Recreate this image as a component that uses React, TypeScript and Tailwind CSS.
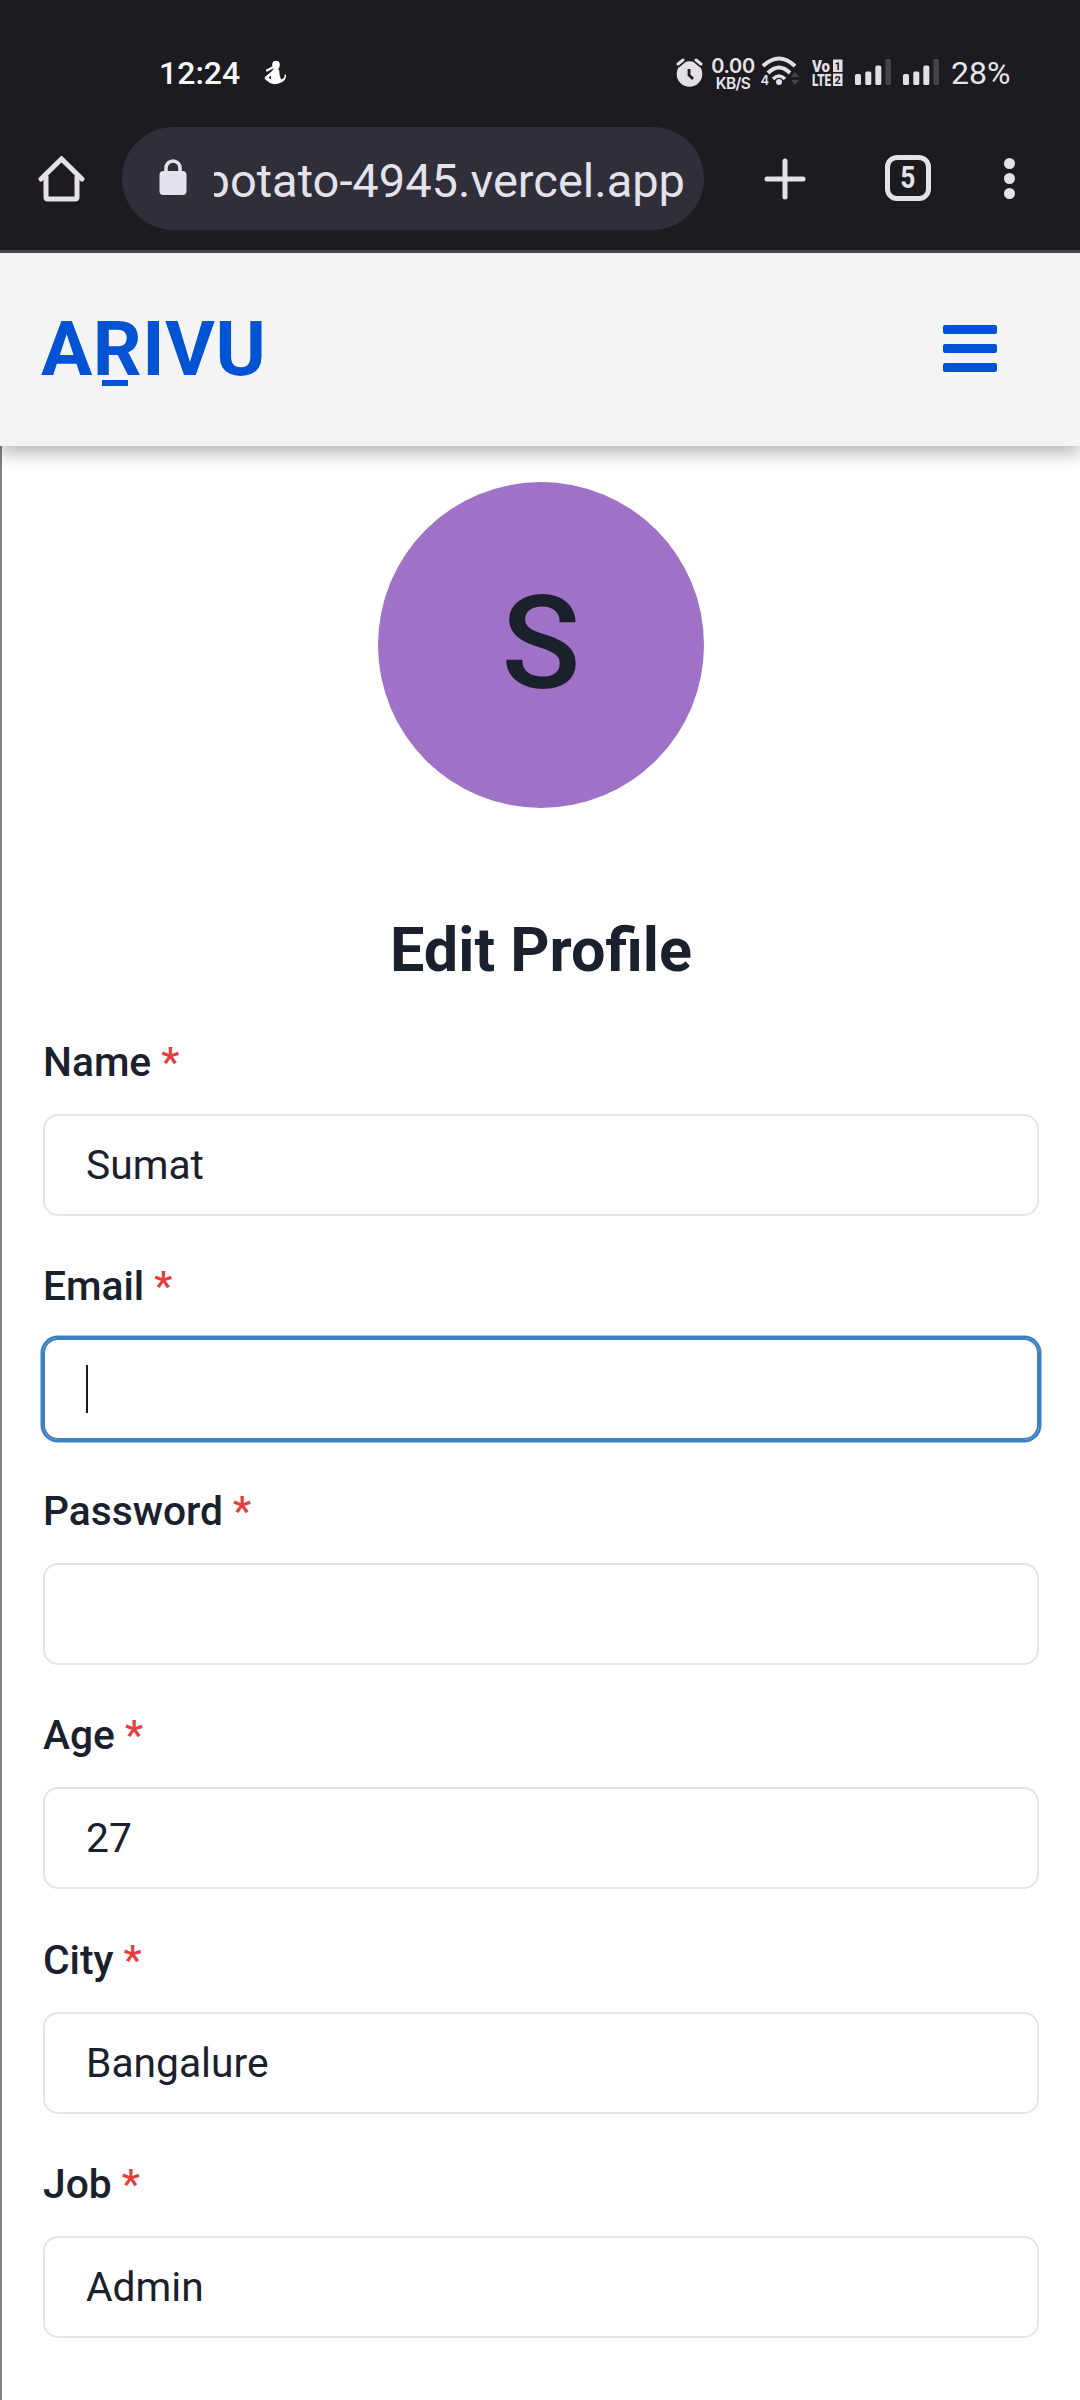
import React from "react";

const fields = [
  { label: "Name", value: "Sumat" },
  { label: "Email", value: "", focused: true },
  { label: "Password", value: "" },
  { label: "Age", value: "27" },
  { label: "City", value: "Bangalure" },
  { label: "Job", value: "Admin" },
];

function SignalBars() {
  return (
    <svg width="38" height="28" viewBox="0 0 38 28" className="shrink-0">
      <rect x="0" y="16" width="6" height="11" rx="1.5" fill="#e2e0e6" />
      <rect x="10.3" y="13.5" width="6" height="13.5" rx="1.5" fill="#e2e0e6" />
      <rect x="20.3" y="7.5" width="6" height="19.5" rx="1.5" fill="#e2e0e6" />
      <rect x="30.5" y="1" width="5.5" height="26" rx="1.5" fill="#454449" />
    </svg>
  );
}

function StatusBar() {
  return (
    <div className="flex h-[127px] items-start pt-[52px] text-[#e6e4ea]">
      <div className="-mt-[1px] ml-[159px] w-[104px] text-[32px] leading-[44px] font-medium text-[#f5f5f7] font-['Roboto',sans-serif]">
        12:24
      </div>
      <svg width="24" height="28" viewBox="0 0 24 28" className="mt-[8px] shrink-0">
        <ellipse cx="13" cy="5" rx="3.8" ry="4.2" fill="#fff" />
        <path d="M4 10.500 9.500 7.500" stroke="#fff" strokeWidth="2" strokeLinecap="round" />
        <path
          d="M11 8.500h4q2 2 1.500 6l1.500 5q4-1 3.500-4.500 2-1.500 1.500 1.500-.5 4-5 6-6 3-11 .5L3 20q-2.500-2-.5-3.500L8 12Z"
          fill="#fff"
        />
        <path d="m5.500 17.500 2.500-2v4Z" fill="#1c1b20" />
      </svg>
      <svg width="28" height="30" viewBox="0 0 28 30" className="mt-[6px] ml-[389px] shrink-0">
        <circle cx="13.5" cy="16" r="12.8" fill="#e2e0e6" />
        <path d="M1 6.500 7.500 1M19.500 1 26 6.500" stroke="#1c1b20" strokeWidth="7" />
        <path d="M2 6 7 2M20 2 25 6" stroke="#e2e0e6" strokeWidth="3" strokeLinecap="round" />
        <path d="M13 11v6l4 4" fill="none" stroke="#1c1b20" strokeWidth="2.8" />
      </svg>
      <div className="mt-[5px] ml-[7px] flex w-[44px] flex-col items-center font-['Inter',sans-serif] font-semibold">
        <span className="text-[20px] leading-[19px] font-semibold tracking-[-0.3px]">0.00</span>
        <span className="text-[15.500px] leading-[15px] tracking-[-0.7px]">KB/S</span>
      </div>
      <svg width="42" height="34" viewBox="0 0 42 34" className="mt-[3px] ml-[5px] shrink-0">
        <g fill="none" stroke="#e2e0e6" strokeWidth="4">
          <path d="M3 11q16-15 32 0" />
          <path d="M8 18q11-11 22 0" />
          <path d="M13 24q6-6 12 0" strokeWidth="3.5" />
        </g>
        <circle cx="19" cy="27" r="3" fill="#e2e0e6" />
        <text x="0.500" y="29.500" fontSize="13" fontWeight="600" fill="#e2e0e6" fontFamily="Inter">4</text>
        <path d="m31 22 4-5 4 5ZM31 25l4 5 4-5Z" fill="#454449" />
      </svg>
      <svg width="32" height="32" viewBox="0 -2 32 32" className="mt-[5px] ml-[10px] shrink-0">
        <g fill="#e2e0e6" fontFamily="Roboto" fontWeight="900">
          <text x="0" y="12.500" fontSize="16" textLength="18" lengthAdjust="spacingAndGlyphs">Vo</text>
          <text x="0" y="26.500" fontSize="16" textLength="19" lengthAdjust="spacingAndGlyphs">LTE</text>
          <rect x="21" y="0.500" width="9.500" height="12.500" />
          <rect x="21" y="14.500" width="9.500" height="12.500" />
        </g>
        <g fill="#1c1b20" fontFamily="Roboto" fontWeight="700" fontSize="11">
          <text x="22.500" y="10.700">1</text>
          <text x="22.500" y="24.700">2</text>
        </g>
      </svg>
      <div className="mt-[6px] ml-[11px] flex gap-[10px]">
        <SignalBars />
        <SignalBars />
      </div>
      <div className="-mt-[1px] ml-[10px] text-[32px] leading-[44px] font-['Roboto',sans-serif]">28%</div>
    </div>
  );
}

function BrowserBar() {
  return (
    <div className="flex h-[126px] items-start border-b-[3px] border-[#48474b] text-[#e4e2ea]">
      <svg width="50" height="50" viewBox="0 0 50 50" className="mt-[26px] ml-[36px] shrink-0" fill="none" stroke="#e4e2e6" strokeWidth="5" strokeLinecap="round">
        <path d="M5 26 25.500 6 46 26" />
        <path d="M10 24v20q0 2 2 2h27q2 0 2-2V24" />
      </svg>
      <div className="ml-[36px] flex h-[103px] w-[582px] items-center rounded-full bg-[#2f2e39] pl-[37px]">
        <svg width="28" height="37" viewBox="0 0 28 37" className="-mt-[3px] shrink-0">
          <rect x="0.500" y="12" width="27" height="24" rx="4" fill="#e4e2ea" />
          <path d="M7 14V9a7 7 0 0 1 14 0v5" fill="none" stroke="#e4e2ea" strokeWidth="3.500" />
        </svg>
        <div className="mt-[4px] ml-[27px] flex w-[471px] justify-end overflow-hidden text-[47px] leading-[64px] whitespace-nowrap font-['Roboto',sans-serif]">
          <span className="shrink-0">potato-4945.vercel.app</span>
        </div>
      </div>
      <svg width="42" height="42" viewBox="0 0 42 42" className="mt-[31px] ml-[60px] shrink-0" stroke="#e4e2e6" strokeWidth="5" strokeLinecap="round">
        <path d="M3 21h36M21 3v36" />
      </svg>
      <div className="mt-[28px] ml-[79px] flex h-[46px] w-[46px] items-center justify-center rounded-[12px] border-[5px] border-[#e4e2e6]">
        <span className="-mt-[1px] scale-x-[.85] text-[31px] leading-[32px] font-bold font-['Roboto',sans-serif]">5</span>
      </div>
      <div className="mt-[31px] ml-[73px] flex flex-col gap-[4px]">
        <i className="h-[11px] w-[11px] rounded-full bg-[#e4e2e6]" />
        <i className="h-[11px] w-[11px] rounded-full bg-[#e4e2e6]" />
        <i className="h-[11px] w-[11px] rounded-full bg-[#e4e2e6]" />
      </div>
    </div>
  );
}

export default function App() {
  return (
    <div className="flex h-[2400px] w-[1080px] flex-col overflow-hidden bg-white font-['Roboto',sans-serif] text-[#1a202c]">
      <div className="shrink-0 bg-[#1c1b20]">
        <StatusBar />
        <BrowserBar />
      </div>
      <header className="relative z-10 flex h-[193px] shrink-0 items-start justify-between bg-[#f4f4f4] pr-[83px] pl-[41px] shadow-[0_8px_16px_rgba(0,0,0,0.27)]">
        <div className="relative mt-[51px] text-[76.400px] leading-[90px] font-bold tracking-[0.5px] text-[#0053d3]">
          ARIVU
          <span className="absolute top-[76px] left-[61px] h-[6px] w-[26px] bg-[#0053d3]" />
        </div>
        <div className="mt-[72px] flex flex-col gap-[10px]">
          <i className="h-[9px] w-[54px] rounded-[2px] bg-[#0053d3]" />
          <i className="h-[9px] w-[54px] rounded-[2px] bg-[#0053d3]" />
          <i className="h-[9px] w-[54px] rounded-[2px] bg-[#0053d3]" />
        </div>
      </header>
      <main className="flex flex-1 flex-col border-l-2 border-[#808080] pt-[36px] pr-[41px] pl-[41px]">
        <div className="flex h-[326px] w-[326px] shrink-0 items-center justify-center self-center rounded-full bg-[#9f72c7] pb-[3px] text-[130.400px] leading-[130px] font-medium">
          S
        </div>
        <h1 className="mt-[105px] h-[74px] text-center text-[61.100px] leading-[74px] font-bold">Edit Profile</h1>
        <form className="mt-[45px] flex flex-col">
          {fields.map((f) => (
            <div key={f.label} className="h-[224.400px]">
              <label className="block h-[82px] text-[40.750px] leading-[61px] font-medium">
                {f.label}
                <span className="ml-[10px] text-[#e53e3e]">*</span>
              </label>
              <div
                className={
                  f.focused
                    ? "flex h-[102px] items-center rounded-[15px] border-2 border-[#3c80c2] pl-[41px] shadow-[0_0_0_2.500px_#3c80c2]"
                    : "flex h-[102px] items-center rounded-[15px] border-2 border-[#e5e5e7] pt-[1px] pl-[41px] text-[40.750px]"
                }
              >
                {f.focused ? <span className="h-[48px] w-[2px] bg-[#1b1b1f]" /> : f.value}
              </div>
            </div>
          ))}
        </form>
      </main>
    </div>
  );
}
